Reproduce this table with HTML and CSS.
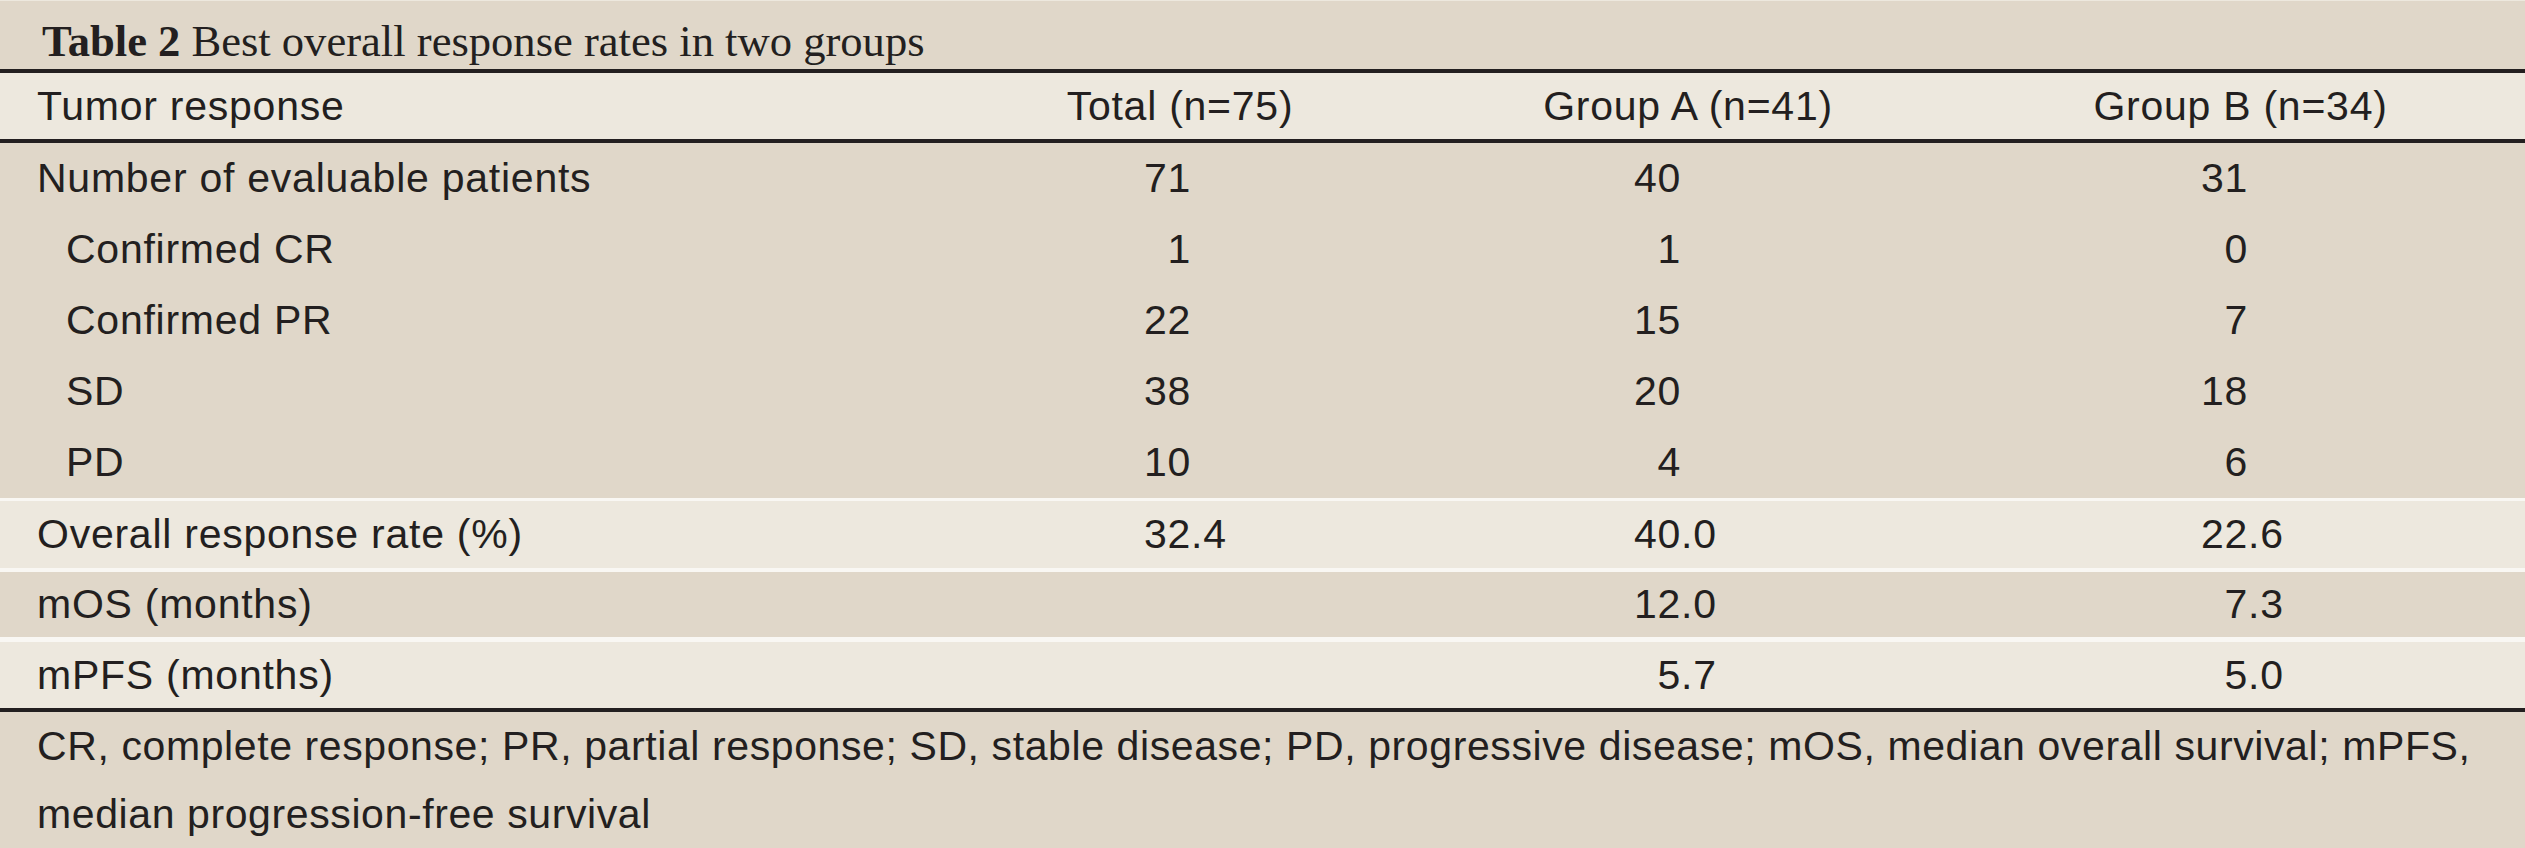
FILE: index.html
```html
<!DOCTYPE html>
<html lang="en">
<head>
<meta charset="utf-8">
<title>Table 2 Best overall response rates in two groups</title>
<link rel="stylesheet" href="styles.css">
</head>
<body>
<div class="table">
  <div class="caption"><b>Table 2</b> Best overall response rates in two groups</div>

  <div class="row head">
    <div class="label">Tumor response</div>
    <div class="hcell">Total (n=75)</div>
    <div class="hcell">Group A (n=41)</div>
    <div class="hcell">Group B (n=34)</div>
  </div>

  <div class="body">
    <div class="row body-row">
      <div class="label">Number of evaluable patients</div>
      <div class="num c2"><span class="i">71</span><span class="f"></span></div>
      <div class="num c3"><span class="i">40</span><span class="f"></span></div>
      <div class="num c4"><span class="i">31</span><span class="f"></span></div>
    </div>
    <div class="row body-row">
      <div class="label sub">Confirmed CR</div>
      <div class="num c2"><span class="i">1</span><span class="f"></span></div>
      <div class="num c3"><span class="i">1</span><span class="f"></span></div>
      <div class="num c4"><span class="i">0</span><span class="f"></span></div>
    </div>
    <div class="row body-row">
      <div class="label sub">Confirmed PR</div>
      <div class="num c2"><span class="i">22</span><span class="f"></span></div>
      <div class="num c3"><span class="i">15</span><span class="f"></span></div>
      <div class="num c4"><span class="i">7</span><span class="f"></span></div>
    </div>
    <div class="row body-row">
      <div class="label sub">SD</div>
      <div class="num c2"><span class="i">38</span><span class="f"></span></div>
      <div class="num c3"><span class="i">20</span><span class="f"></span></div>
      <div class="num c4"><span class="i">18</span><span class="f"></span></div>
    </div>
    <div class="row body-row">
      <div class="label sub">PD</div>
      <div class="num c2"><span class="i">10</span><span class="f"></span></div>
      <div class="num c3"><span class="i">4</span><span class="f"></span></div>
      <div class="num c4"><span class="i">6</span><span class="f"></span></div>
    </div>
  </div>

  <div class="row light orr">
    <div class="label">Overall response rate (%)</div>
    <div class="num c2"><span class="i">32</span><span class="f">.4</span></div>
    <div class="num c3"><span class="i">40</span><span class="f">.0</span></div>
    <div class="num c4"><span class="i">22</span><span class="f">.6</span></div>
  </div>

  <div class="row dark mos">
    <div class="label">mOS (months)</div>
    <div class="num c2"></div>
    <div class="num c3"><span class="i">12</span><span class="f">.0</span></div>
    <div class="num c4"><span class="i">7</span><span class="f">.3</span></div>
  </div>

  <div class="row light mpfs">
    <div class="label">mPFS (months)</div>
    <div class="num c2"></div>
    <div class="num c3"><span class="i">5</span><span class="f">.7</span></div>
    <div class="num c4"><span class="i">5</span><span class="f">.0</span></div>
  </div>

  <div class="foot">CR, complete response; PR, partial response; SD, stable disease; PD, progressive disease; mOS, median overall survival; mPFS, median progression-free survival</div>
</div>
</body>
</html>
```

FILE: styles.css
```css
html, body {
  margin: 0;
  padding: 0;
}

body {
  width: 2525px;
  height: 848px;
  overflow: hidden;
  background: #e0d7c9;
  color: #231f20;
  font-family: "Liberation Sans", Arial, Helvetica, sans-serif;
  font-size: 41px;
  letter-spacing: 0.75px;
}

.table {
  width: 2525px;
  height: 848px;
  display: flex;
  flex-direction: column;
  background: #e0d7c9;
}

.caption {
  height: 57px;
  padding-top: 12px;
  border-top: 1px solid #ede8de;
  border-bottom: 4px solid #231f20;
  display: flex;
  align-items: center;
  padding-left: 42px;
  font-family: "Liberation Serif", "Times New Roman", serif;
  font-size: 44.6px;
  letter-spacing: 0;
  line-height: 1;
}

.caption b {
  font-weight: bold;
  margin-right: 11px;
}

.row {
  display: grid;
  grid-template-columns: 940px 480px 536px 1fr;
  align-items: center;
  line-height: 1;
}

.head {
  height: 68px;
  background: #ede8de;
  border-bottom: 4px solid #231f20;
}

.hcell {
  text-align: center;
}

.label {
  padding-left: 37px;
}

.label.sub {
  padding-left: 66px;
}

.body-row {
  height: 71px;
}

.light {
  background: #ede8de;
}

.dark {
  background: #e0d7c9;
}

.orr {
  height: 68px;
  border-top: 3px solid #f9f7f3;
}

.mos {
  height: 67px;
  border-top: 4px solid #f9f7f3;
}

.mpfs {
  height: 67px;
  border-top: 5px solid #f9f7f3;
  border-bottom: 4px solid #231f20;
}

.num {
  display: flex;
}

.num .i {
  text-align: right;
}

.c2 .i { width: 251px; }
.c3 .i { width: 261px; }
.c4 .i { width: 292px; }

.foot {
  flex: 1;
  padding: 0 0 0 37px;
  line-height: 68px;
  letter-spacing: 0.6px;
}
```
